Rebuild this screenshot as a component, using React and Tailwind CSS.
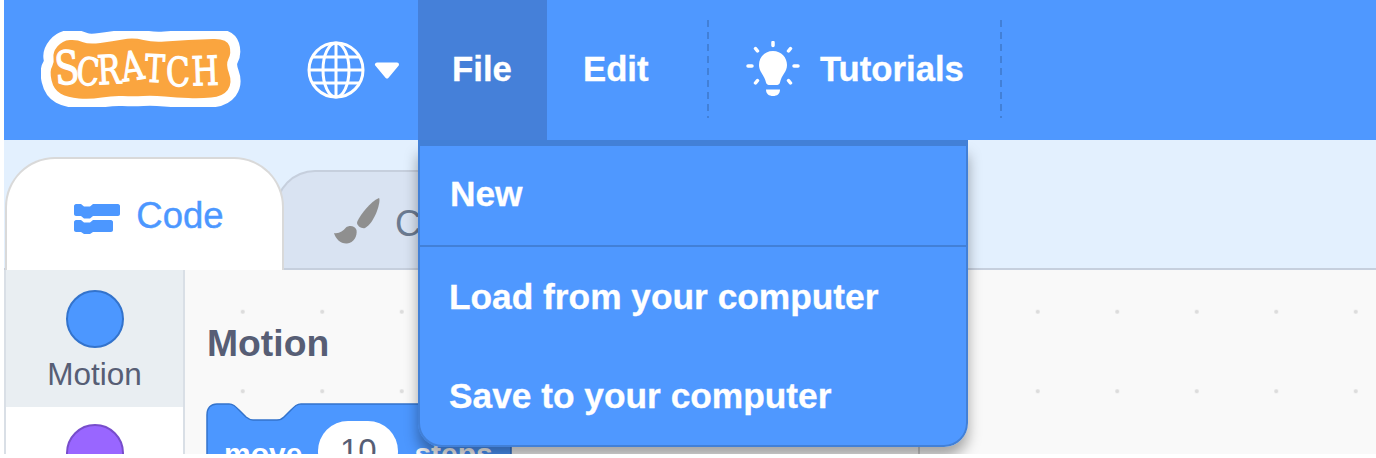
import React from "react";

const FONT = "font-['Liberation_Sans',Arial,sans-serif]";

const logoLetters = [
  { ch: "S", x: 26, y: 53, size: 46, rot: -4 },
  { ch: "C", x: 47, y: 54, size: 38, rot: 5 },
  { ch: "R", x: 68, y: 53, size: 40, rot: -3 },
  { ch: "A", x: 91, y: 49, size: 40, rot: -8 },
  { ch: "T", x: 114, y: 51, size: 38, rot: 3 },
  { ch: "C", x: 137, y: 55, size: 40, rot: -2 },
  { ch: "H", x: 164, y: 54, size: 40, rot: -2 },
];

const blobPoints = [
  [13, 22], [22, 11], [36, 10], [47, 15], [72, 12], [92, 8], [112, 13], [136, 11], [159, 10], [185, 9],
  [189, 22], [183, 33], [190, 52], [181, 64], [159, 66], [136, 65], [112, 63], [92, 64], [72, 63], [49, 67],
  [27, 65], [14, 58], [10, 40], [15, 32],
];

// rounds the outline: each point becomes a control point between two midpoints
function smoothPath(points) {
  const mid = (a, b) => [(a[0] + b[0]) / 2, (a[1] + b[1]) / 2];
  const start = mid(points[points.length - 1], points[0]);
  let d = `M${start[0]} ${start[1]}`;
  points.forEach((p, i) => {
    const m = mid(p, points[(i + 1) % points.length]);
    d += ` Q${p[0]} ${p[1]} ${m[0]} ${m[1]}`;
  });
  return d + " Z";
}

function ScratchLogo() {
  const blob = smoothPath(blobPoints);
  return (
    <svg width="200" height="76" viewBox="0 0 200 76" className="ml-[37px] mt-[-2px] shrink-0">
      <path d={blob} fill="#fff" stroke="#fff" strokeWidth="23" strokeLinejoin="round" />
      <path d={blob} fill="#faa53f" stroke="#faa53f" strokeWidth="3" strokeLinejoin="round" />
      {logoLetters.map((l, i) => (
        <text
          key={i}
          x={l.x}
          y={l.y}
          fontSize={l.size}
          fontFamily="'DejaVu Serif', serif"
          fontWeight="400"
          fill="#fff"
          stroke="#fff"
          strokeWidth="1.2"
          textAnchor="middle"
          transform={`rotate(${l.rot} ${l.x} ${l.y - 15}) translate(${l.x} 0) scale(0.78 1) translate(${-l.x} 0)`}
        >
          {l.ch}
        </text>
      ))}
    </svg>
  );
}

function GlobeIcon() {
  return (
    <svg width="60" height="60" viewBox="0 0 60 60" fill="none" stroke="#fff" strokeWidth="3" className="shrink-0">
      <circle cx="30" cy="30" r="27" />
      <ellipse cx="30" cy="30" rx="13" ry="27" />
      <path d="M30 3V57M3 30H57M7 17H53M7 43H53" />
    </svg>
  );
}

function Caret() {
  return (
    <svg width="26" height="17" viewBox="0 0 26 17" className="shrink-0">
      <path d="M3 2.500H23L13 14.500Z" fill="#fff" stroke="#fff" strokeWidth="4" strokeLinejoin="round" />
    </svg>
  );
}

function BulbIcon() {
  return (
    <svg width="54" height="58" viewBox="0 0 54 58" className="shrink-0">
      <path
        d="M27 10C18.500 10 13 16.500 13 24C13 31 18.500 34 20 41.500C20.500 43.500 22 44 24 44H30C32 44 33.500 43.500 34 41.500C35.500 34 41 31 41 24C41 16.500 35.500 10 27 10Z"
        fill="#fff"
      />
      <path d="M20 48.500H34C34 53 31 55 27 55C23 55 20 53 20 48.500Z" fill="#fff" />
      <g stroke="#fff" strokeWidth="3.500" strokeLinecap="round">
        <path d="M27 1.500V4.500M9.500 7.500L11.500 10M44.500 7.500L42.500 10M2 25H6M48 25H52M9.500 42L11.500 39.500M44.500 42L42.500 39.500" />
      </g>
    </svg>
  );
}

function CodeIcon() {
  return (
    <svg width="46" height="30" viewBox="0 0 46 30" className="shrink-0" fill="#4c97ff">
      <path d="M2 0H7L10 2.500H16L19 0H44C45 0 46 1 46 2V10C46 11 45 12 44 12H19L16 14.500H10L7 12H2C1 12 0 11 0 10V2C0 1 1 0 2 0Z" />
      <path d="M2 16H7L10 18.500H16L19 16H37C38 16 39 17 39 18V26C39 27 38 28 37 28H19L16 30H10L7 28H2C1 28 0 27 0 26V18C0 17 1 16 2 16Z" />
    </svg>
  );
}

function BrushIcon() {
  return (
    <svg width="48" height="48" viewBox="0 0 48 48" className="shrink-0" fill="#8f8f8f">
      <path d="M46 1C47 2 46.500 7 44 14C41 22 37 28 32 31C30.500 31.500 28 31 26 29.500C24 27.500 23.500 26 24.500 24C28 17 37 5 46 1Z" />
      <path d="M1 36C6 37 10 34 13 30.500C16 28 22 28.500 23.500 33C24.500 39 21 46 14 46.500C8 47 2.500 42 1 36Z" />
    </svg>
  );
}

function BlockShape() {
  return (
    <svg width="306" height="60" viewBox="0 0 306 60" className="absolute left-0 top-0">
      <path
        d="M1 59V12C1 5 5 1 11 1H23C27 1 29 3 33 7L40 14C42.500 16 44 17 47 17H71C74 17 76 16 78 14L85 7C89 3 91 1 95 1H305V59Z"
        fill="#4c97ff"
        stroke="#3373cc"
        strokeWidth="1.500"
      />
    </svg>
  );
}

function DashedDivider() {
  return (
    <div className="mb-[2px] h-[98px] w-[2px] shrink-0 bg-[repeating-linear-gradient(to_bottom,#4280d7_0,#4280d7_7px,transparent_7px,transparent_12px)]" />
  );
}

function FileMenu() {
  return (
    <div className={`absolute left-[418px] top-[140px] z-20 w-[550px] overflow-hidden rounded-b-[24px] border-x-2 border-b-2 border-t-[6px] border-[#4280d7] bg-[#4f98ff] text-[35.300px] font-bold leading-none text-white [-webkit-text-stroke:0.3px_#fff] ${FONT}`}>
      <div className="flex h-[101px] items-center border-b-2 border-[#4280d7] pl-[30px] pb-[4px]">New</div>
      <div className="flex h-[100px] items-center pl-[29px]">Load from your computer</div>
      <div className="flex h-[98px] items-center pl-[29px]">Save to your computer</div>
    </div>
  );
}

export default function App() {
  return (
    <div className={`relative h-[458px] w-[1376px] overflow-hidden bg-white ${FONT}`}>
      <div className="relative h-[454px] overflow-hidden pl-1">
        {/* top bar */}
        <div className="flex h-[140px] items-center bg-[#4f98ff] text-[34.700px] font-bold leading-none text-white [-webkit-text-stroke:0.3px_#fff]">
          <ScratchLogo />
          <div className="ml-[65px] flex items-center gap-[8px]">
            <GlobeIcon />
            <Caret />
          </div>
          <div className="ml-[18px] flex h-full w-[129px] items-center justify-center bg-[#4580d9] pb-[2px] pr-[1px]">File</div>
          <div className="ml-[36px] w-[124px] pb-[2px]">Edit</div>
          <DashedDivider />
          <div className="ml-[37px] flex w-[254px] items-center gap-[20px]">
            <BulbIcon />
            <span className="pb-[2px]">Tutorials</span>
          </div>
          <DashedDivider />
        </div>

        {/* tabs */}
        <div className="relative flex h-[130px] items-end border-b-2 border-[#c6cfdd] bg-[#e3f0fe] text-[36.500px] leading-none">
          <div className="relative z-10 mb-[-2px] ml-px flex h-[113px] w-[279px] items-center justify-center gap-[16px] rounded-t-[50px] border-x-2 border-t-2 border-[#d9d9d9] bg-white pl-[9px] pt-[8px] text-[#4c97ff] [-webkit-text-stroke:0.4px_#4c97ff]">
            <CodeIcon />
            <span className="mt-[-5px]">Code</span>
          </div>
          <div className="ml-[-9px] flex h-[98px] w-[300px] items-center gap-[14px] rounded-t-[40px] border-x-2 border-t-2 border-[#c6cfdd] bg-[#d9e3f2] pl-[56px] pt-[2px] text-[#6b7a90]">
            <BrushIcon />
            <span className="mt-[6px]">Costumes</span>
          </div>
        </div>

        {/* workspace */}
        <div className="flex h-[184px] bg-[#f9f9f9] bg-[radial-gradient(circle,#dcdcdc_1.500px,transparent_2.500px)] bg-[size:79.500px_79.500px] bg-[position:40px_2px]">
          <div className="w-[181px] shrink-0 border-x-2 border-[#d9dfe6] bg-white text-[#575e75]">
            <div className="flex h-[137px] flex-col items-center bg-[#e9eef2] pt-[20px]">
              <div className="size-[58px] rounded-full border-2 border-[#3373cc] bg-[#4c97ff]" />
              <div className="mt-[8px] text-[31.500px] leading-[36px]">Motion</div>
            </div>
            <div className="flex justify-center pt-[17px]">
              <div className="size-[58px] rounded-full border-2 border-[#774dcb] bg-[#9966ff]" />
            </div>
          </div>
          <div className="w-[735px] shrink-0 border-r-2 border-[#cfcfcf] pl-[21px]">
            <div className="mt-[55px] pl-px text-[37.300px] font-bold leading-none text-[#575e75]">Motion</div>
            <div className="relative mt-[41px] h-[60px] w-[306px]">
              <BlockShape />
              <div className="relative flex items-start pl-[18px] pt-[18px] font-bold leading-none">
                <span className="mt-[18px] text-[30px] text-white">move</span>
                <div className="ml-[16px] flex h-[60px] w-[80px] justify-center rounded-[30px] bg-white pt-[13px] text-[33px] font-normal text-[#575e75]">
                  10
                </div>
                <span className="ml-[16px] mt-[18px] text-[30px] text-white">steps</span>
              </div>
            </div>
          </div>
        </div>

        <div className="absolute left-[418px] top-[145px] z-10 h-[302px] w-[550px] rounded-b-[24px] shadow-[0_10px_14px_rgba(0,0,0,0.34)]" />
        <FileMenu />
      </div>
    </div>
  );
}
